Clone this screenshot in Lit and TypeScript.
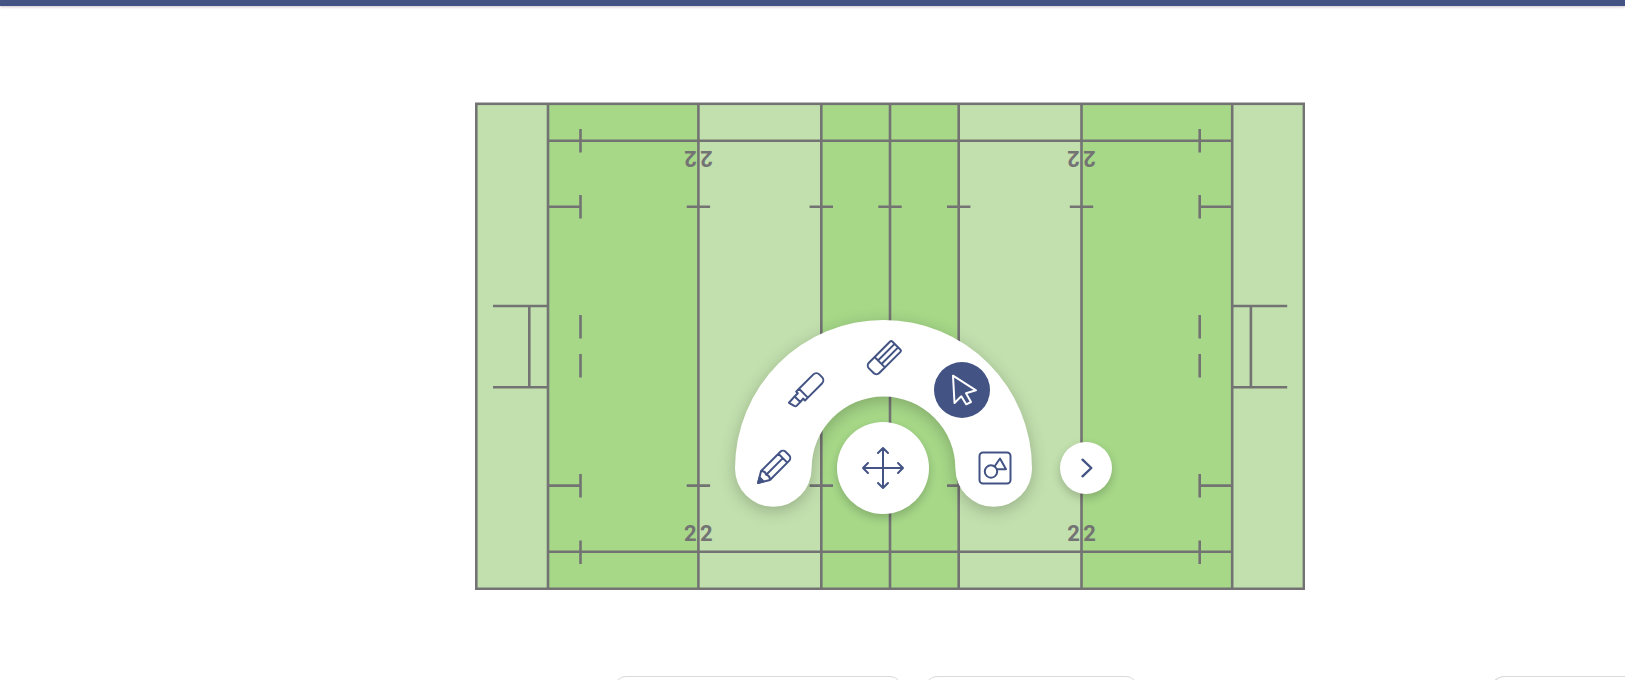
import { LitElement, html, svg, css } from "lit";
import { customElement, state } from "lit/decorators.js";

const LENGTH_LINES = [223.4, 346.3, 415, 483.7, 606.5];

@customElement("pitch-board")
class PitchBoard extends LitElement {
  static styles = css`
    :host { display: block; }
    svg { display: block; width: 100%; height: auto; }
    .light { fill: #c2e0ae; }
    .dark { fill: #a6d888; }
    .line { fill: none; stroke: #737373; stroke-width: 2.6; }
    .mark { fill: #737373; font: 700 22px Roboto, "Liberation Sans", sans-serif; text-anchor: middle; }
  `;

  private number(x: number) {
    return svg`
      <g class="mark">
        <text x=${x - 8} y="439">2</text>
        <text x=${x + 8} y="439">2</text>
        <g transform="rotate(180 ${x} 49)">
          <text x=${x - 8} y="49">2</text>
          <text x=${x + 8} y="49">2</text>
        </g>
      </g>`;
  }

  /* One end of the field: try line, dashes and goal posts. */
  private end() {
    return svg`
      <path class="line" d="M73 2V487
        M105.5 27v23.5 M105.5 93v23.5 M105.5 213v23.5 M105.5 252v23.5 M105.5 372v23.5 M105.5 438.5v23.5
        M73 104.8H106.5 M73 383.6H106.5
        M18 204H73 M18 285.2H73 M54.3 204V285.2"/>`;
  }

  render() {
    const ticks = LENGTH_LINES.map((x) => `M${x - 11.7} 104.8h23.4M${x - 11.7} 383.6h23.4M${x} 2V487`).join("");
    return html`
      <svg viewBox="0 0 830 488" role="img" aria-label="Rugby pitch">
        <rect class="light" x="1" y="2" width="828" height="485"/>
        <rect class="dark" x="73" y="2" width="150.4" height="485"/>
        <rect class="dark" x="346.3" y="2" width="137.4" height="485"/>
        <rect class="dark" x="606.5" y="2" width="151" height="485"/>
        ${this.end()}
        <g transform="translate(830.2 0) scale(-1 1)">${this.end()}</g>
        <path class="line" d=${ticks}/>
        <path class="line" d="M73 38.8H757.2 M73 449.8H757.2"/>
        <rect class="line" x="1.3" y="1.8" width="827.6" height="485"/>
        ${this.number(223.4)} ${this.number(606.5)}
      </svg>`;
  }
}

const ICONS: Record<string, unknown> = {
  pencil: svg`<g transform="rotate(-45)">
      <path d="M-22.5 0L-12 -6.3H15a4 4 0 0 1 4 4V2.300a4 4 0 0 1 -4 4H-12Z M12.5 -6.3V6.3 M-11 0H12.5 M-12 -6.3q3 3.2 1 6.3q2 3.200 -1 6.3"/>
      <path class="solid" d="M-22.5 0l5 -2.8v5.6z"/>
    </g>`,
  highlighter: svg`<g transform="rotate(-45)">
      <path d="M-5.5 -5.8H14.5a4.5 4.5 0 0 1 4.5 4.500V2.200a4.5 4.5 0 0 1 -4.5 4.5H-5.5Z
        M-5.5 -5.8H-9.5V-3.5H-14L-22.5 -3L-21 3Q-20.5 4.5 -19 4.5H-14L-9.5 4V6.7H-5.5 M-14 -3.5V4.500"/>
    </g>`,
  eraser: svg`<g transform="rotate(-45)">
      <path d="M-14 -7.3H16a1.5 1.5 0 0 1 1.5 1.5V5.8a1.5 1.5 0 0 1 -1.5 1.5H-14a4 4 0 0 1 -4 -4V-3.3a4 4 0 0 1 4 -4Z
        M-6 -7.3V7.3 M-6 -2.5H17.5 M-6 2.5H17.5"/>
    </g>`,
  select: svg`<path d="M-9 -14.3L14 0.3L4 3.2L9 12L4.2 14.3L-0.7 6.3L-7.5 13Z"/>`,
  shapes: svg`
      <rect x="-15.5" y="-15.5" width="31" height="31" rx="3.5"/>
      <circle cx="-4" cy="3.5" r="6.2"/>
      <path d="M-0.5 -1.5L5 -9.5L11 1.2H2"/>`,
  move: svg`<path d="M-20 0H20 M0 -20V20 M-15 -5L-20 0L-15 5 M15 -5L20 0L15 5 M-5 -15L0 -20L5 -15 M-5 15L0 20L5 15"/>`,
  next: svg`<path class="bold" d="M-3.5 -8.3L5.3 0L-3.5 8.3"/>`,
};

@customElement("radial-toolbar")
class RadialToolbar extends LitElement {
  static styles = css`
    :host { display: block; width: 377px; height: 195px; }
    .arc { position: absolute; inset: 0; overflow: visible; fill: #fff; filter: drop-shadow(0 4px 8px rgba(0, 0, 0, 0.22)); }
    button {
      position: absolute; display: grid; place-items: center; width: 56px; height: 56px; padding: 0;
      border: 0; border-radius: 50%; background: none; color: #425384; cursor: pointer;
    }
    button svg { width: 48px; height: 48px; fill: none; stroke: currentColor; stroke-width: 2; stroke-linecap: round; stroke-linejoin: round; }
    .solid { fill: currentColor; }
    .bold { stroke-width: 2.4; }
    .active { background: #425384; color: #fff; }
    .pencil { left: 11px; top: 119px; }
    .highlighter { left: 44px; top: 41px; }
    .eraser { left: 121px; top: 10px; }
    .select { left: 199px; top: 42px; }
    .shapes { left: 232px; top: 120px; }
    .move { left: 102px; top: 102px; width: 92px; height: 92px; }
    .next { left: 325px; top: 122px; width: 52px; height: 52px; }
    .move, .next { background: #fff; box-shadow: 0 4px 10px rgba(0, 0, 0, 0.2); }
  `;

  @state() private active = "select";

  private tool(name: string, label: string) {
    return html`
      <button class="${name} ${this.active === name ? "active" : ""}" aria-label=${label} @click=${() => (this.active = name)}>
        <svg viewBox="-24 -24 48 48">${ICONS[name]}</svg>
      </button>`;
  }

  private control(name: string, label: string) {
    return html`<button class=${name} aria-label=${label}><svg viewBox="-24 -24 48 48">${ICONS[name]}</svg></button>`;
  }

  render() {
    return html`
      <svg class="arc" width="297" height="187" viewBox="0 0 297 187">
        <path d="M0 148.5A148.5 148.5 0 0 1 297 148.5A38.3 38.3 0 0 1 220.4 148.5A71.9 71.9 0 0 0 76.6 148.5A38.3 38.3 0 0 1 0 148.5Z"/>
      </svg>
      ${this.tool("pencil", "Pencil")} ${this.tool("highlighter", "Highlighter")} ${this.tool("eraser", "Eraser")}
      ${this.tool("select", "Select")} ${this.tool("shapes", "Shapes")}
      ${this.control("move", "Move toolbar")} ${this.control("next", "Next")}`;
  }
}

@customElement("app-root")
class AppRoot extends LitElement {
  static styles = css`
    :host { display: flex; flex-direction: column; height: 100vh; overflow: hidden; background: #fff; font-family: Roboto, sans-serif; }
    header { flex: none; height: 6px; background: #425384; box-shadow: 0 1px 3px rgba(60, 20, 50, 0.25); }
    main { flex: none; display: flex; justify-content: center; padding: 96px 0 86px 155px; }
    .board { position: relative; width: 830px; max-width: 100%; }
    radial-toolbar { position: absolute; left: 260px; top: 218px; }
    footer { flex: none; display: flex; gap: 23px; padding-left: 614px; }
    .panel { box-sizing: border-box; height: 64px; width: 288px; border: 1px solid #d9d9d9; border-radius: 12px; background: #fff; }
    .medium { width: 213px; }
    .edge { width: 133px; margin-left: auto; border-right: 0; border-radius: 12px 0 0 12px; }
  `;

  render() {
    return html`
      <header></header>
      <main>
        <div class="board">
          <pitch-board></pitch-board>
          <radial-toolbar></radial-toolbar>
        </div>
      </main>
      <footer>
        <div class="panel"></div>
        <div class="panel medium"></div>
        <div class="panel edge"></div>
      </footer>`;
  }
}
